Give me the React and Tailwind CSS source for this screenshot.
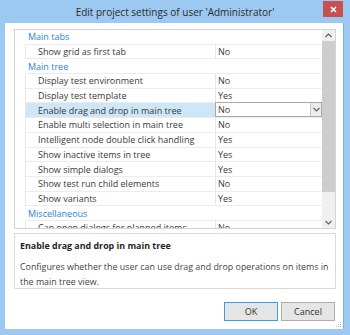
import React from "react";

const rows = [
  { cat: "Main tabs" },
  { name: "Show grid as first tab", value: "No" },
  { cat: "Main tree" },
  { name: "Display test environment", value: "No" },
  { name: "Display test template", value: "Yes" },
  { name: "Enable drag and drop in main tree", value: "No", selected: true },
  { name: "Enable multi selection in main tree", value: "No" },
  { name: "Intelligent node double click handling", value: "Yes" },
  { name: "Show inactive items in tree", value: "Yes" },
  { name: "Show simple dialogs", value: "Yes" },
  { name: "Show test run child elements", value: "No" },
  { name: "Show variants", value: "Yes" },
  { cat: "Miscellaneous" },
  { name: "Can open dialogs for planned items", value: "No" },
];

function Chevron({ up }) {
  return (
    <svg width="7" height="5" viewBox="0 0 7 5" className="block">
      <path
        d={up ? "M0.5 4 L3.5 1 L6.5 4" : "M0.5 1 L3.5 4 L6.5 1"}
        fill="none"
        stroke="#606060"
        strokeWidth="1.2"
      />
    </svg>
  );
}

function Row({ r }) {
  if (r.cat) {
    return (
      <div className="flex h-[14.7px] shrink-0">
        <div className="w-[11px] shrink-0" />
        <div className="flex-1 flex items-center border-b border-[#ececec] pl-[2px] text-[#2a7fd9]">
          {r.cat}
        </div>
      </div>
    );
  }
  return (
    <div className="flex h-[14.7px] shrink-0">
      <div className="w-[11px] shrink-0 border-r border-[#e6e6e6]" />
      <div className="flex-1 flex border-b border-[#ececec]">
        <div
          className={
            "w-[190px] shrink-0 flex items-center pl-[12px] border-r border-[#e6e6e6] whitespace-nowrap overflow-hidden " +
            (r.selected ? "bg-[#cde6f8]" : "")
          }
        >
          {r.name}
        </div>
        {r.selected ? (
          <div className="flex-1 flex border border-[#a9a9a9] bg-white -mt-[1px] -ml-[1px]">
            <div className="flex-1 flex items-center pl-[2px]">{r.value}</div>
            <div className="w-[11px] flex items-center justify-center border-l border-[#c8c8c8] bg-[#ededed]">
              <Chevron />
            </div>
          </div>
        ) : (
          <div className="flex-1 flex items-center pl-[2px]">{r.value}</div>
        )}
      </div>
    </div>
  );
}

export default function App() {
  return (
    <div
      className="relative w-[350px] h-[335px] bg-[#9cc9f1] flex flex-col text-[#3a3a3a] leading-none"
      style={{ fontFamily: '"Open Sans", "Noto Sans", sans-serif' }}
    >
      <div className="h-[23px] shrink-0 flex items-center justify-center text-[10px] text-[#2b2b2b]">
        Edit project settings of user 'Administrator'
      </div>
      <div className="absolute top-[1px] right-[7px] w-[20px] h-[16px] bg-[#c75050] flex items-center justify-center">
        <svg width="7" height="7" viewBox="0 0 7 7">
          <path d="M1 1 L6 6 M6 1 L1 6" stroke="white" strokeWidth="1.6" />
        </svg>
      </div>

      <div className="relative flex-1 ml-[5px] mr-[6px] mb-[6px] bg-white flex flex-col pt-[6px] pl-[9px] pr-[7px] border-r border-[#78b4ec]">
        {/* property grid */}
        <div className="h-[200px] shrink-0 border border-[#d4d4d4] flex overflow-hidden text-[9px]">
          <div className="flex-1 flex flex-col overflow-hidden">
            {rows.map((r, i) => (
              <Row key={i} r={r} />
            ))}
          </div>
          <div className="w-[13px] shrink-0 flex flex-col bg-[#f0f0f0]">
            <div className="h-[11px] flex items-center justify-center">
              <Chevron up />
            </div>
            <div className="h-[151px] bg-[#cdcdcd]" />
            <div className="flex-1" />
            <div className="h-[11px] flex items-center justify-center">
              <Chevron />
            </div>
          </div>
        </div>

        {/* description */}
        <div className="mt-[4px] h-[56px] shrink-0 border border-[#d9d9d9] px-[5px] pt-[8px] text-[8.9px]">
          <div className="font-bold text-[#1f1f1f]">Enable drag and drop in main tree</div>
          <div className="mt-[8px] leading-[15px] text-[#444]">
            Configures whether the user can use drag and drop operations on items in the main tree view.
          </div>
        </div>

        {/* buttons */}
        <div className="mt-[13px] flex justify-end gap-[3px] pr-[1px] text-[9px]">
          <button className="w-[54px] h-[19px] border border-[#3c9be6] bg-[#e5e5e5] flex items-center justify-center text-[#333]">
            OK
          </button>
          <button className="w-[54px] h-[19px] border border-[#adadad] bg-[#e5e5e5] flex items-center justify-center text-[#333]">
            Cancel
          </button>
        </div>

        <svg
          className="absolute right-[1px] bottom-[1px]"
          width="7"
          height="7"
          viewBox="0 0 7 7"
        >
          <rect x="5" y="1" width="1" height="1" fill="#b5b5b5" />
          <rect x="3" y="3" width="1" height="1" fill="#b5b5b5" />
          <rect x="5" y="3" width="1" height="1" fill="#b5b5b5" />
          <rect x="1" y="5" width="1" height="1" fill="#b5b5b5" />
          <rect x="3" y="5" width="1" height="1" fill="#b5b5b5" />
          <rect x="5" y="5" width="1" height="1" fill="#b5b5b5" />
        </svg>
      </div>
    </div>
  );
}
